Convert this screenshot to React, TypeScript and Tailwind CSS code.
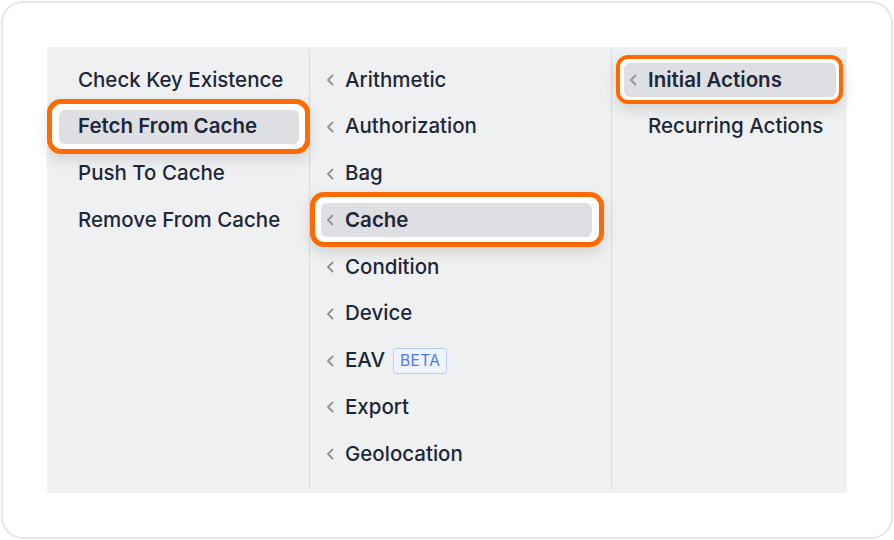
import type { ReactNode } from "react";

const font = { fontFamily: "Inter, 'Noto Sans', sans-serif" };

function Chevron({ hidden }: { hidden?: boolean }) {
  return (
    <svg width="8" height="12" viewBox="0 0 8 12" className={hidden ? "invisible shrink-0" : "shrink-0"}>
      <path d="M6.5 1.5 L2 6 L6.5 10.5" fill="none" stroke="#8f949c" strokeWidth="1.8" strokeLinecap="round" strokeLinejoin="round" />
    </svg>
  );
}

function Row({ label, chevron, active, children }: { label: string; chevron?: "show" | "hide"; active?: boolean; children?: ReactNode }) {
  return (
    <div
      className={
        "flex h-[34px] items-center rounded-[6px] text-[20.5px] text-[#1e2738] " +
        (active ? "bg-[#dedfe3] font-semibold " : "font-medium ") +
        (chevron ? "gap-[11px] pl-[5px]" : "pl-[19px]")
      }
    >
      {chevron && <Chevron hidden={chevron === "hide"} />}
      <span className="flex items-center">
        {label}
        {children}
      </span>
    </div>
  );
}

export default function App() {
  return (
    <div className="h-[540px] w-[894px] bg-white p-px" style={font}>
      <div className="h-full w-full rounded-[22px] border-2 border-[#e3e6ea] bg-white p-[44px]">
        <div className="flex h-full bg-[#eff0f2]">
          {/* actions */}
          <div className="my-[3px] flex w-[263px] shrink-0 flex-col gap-[12.75px] rounded-br-[4px] border-r border-[#d8d9dd] pl-[12px] pr-[10px] pt-[13px]">
            <Row label="Check Key Existence" />
            <div className="relative z-10 -mb-[10px] -ml-[12px] -mr-[11px] -mt-[11px] rounded-[14px] border-[5px] border-[#ff6b00] bg-white pb-[5px] pl-[7px] pr-[6px] pt-[6px] shadow-[0_6px_14px_rgba(0,0,0,0.12)]">
              <Row label="Fetch From Cache" active />
            </div>
            <Row label="Push To Cache" />
            <Row label="Remove From Cache" />
          </div>

          {/* categories */}
          <div className="my-[3px] flex w-[302px] shrink-0 flex-col gap-[12.75px] rounded-br-[4px] border-r border-[#d8d9dd] pl-[11px] pr-[19px] pt-[13px]">
            <Row label="Arithmetic" chevron="show" />
            <Row label="Authorization" chevron="show" />
            <Row label="Bag" chevron="show" />
            <div className="relative z-10 -mb-[10px] -ml-[11px] -mr-[12px] -mt-[11px] rounded-[14px] border-[5px] border-[#ff6b00] bg-white pb-[5px] pl-[6px] pr-[7px] pt-[6px] shadow-[0_6px_14px_rgba(0,0,0,0.12)]">
              <Row label="Cache" chevron="show" active />
            </div>
            <Row label="Condition" chevron="show" />
            <Row label="Device" chevron="show" />
            <Row label="EAV" chevron="show">
              <span className="ml-[8px] flex h-[26px] items-center rounded-[4px] border border-[#b8cbfa] bg-[#eef3ff] px-[6px] text-[15.5px] font-normal tracking-[0.4px] text-[#4d79ee]">
                BETA
              </span>
            </Row>
            <Row label="Export" chevron="show" />
            <Row label="Geolocation" chevron="show" />
          </div>

          {/* triggers */}
          <div className="my-[3px] flex flex-1 flex-col gap-[12.75px] pl-[12px] pr-[11px] pt-[13px]">
            <div className="relative z-10 -mb-[7px] -ml-[8px] -mr-[7px] -mt-[8px] rounded-[12px] border-[4px] border-[#ff6b00] bg-white pb-[3px] pl-[4px] pr-[3px] pt-[4px] shadow-[0_6px_14px_rgba(0,0,0,0.12)]">
              <Row label="Initial Actions" chevron="show" active />
            </div>
            <Row label="Recurring Actions" chevron="hide" />
          </div>
        </div>
      </div>
    </div>
  );
}
